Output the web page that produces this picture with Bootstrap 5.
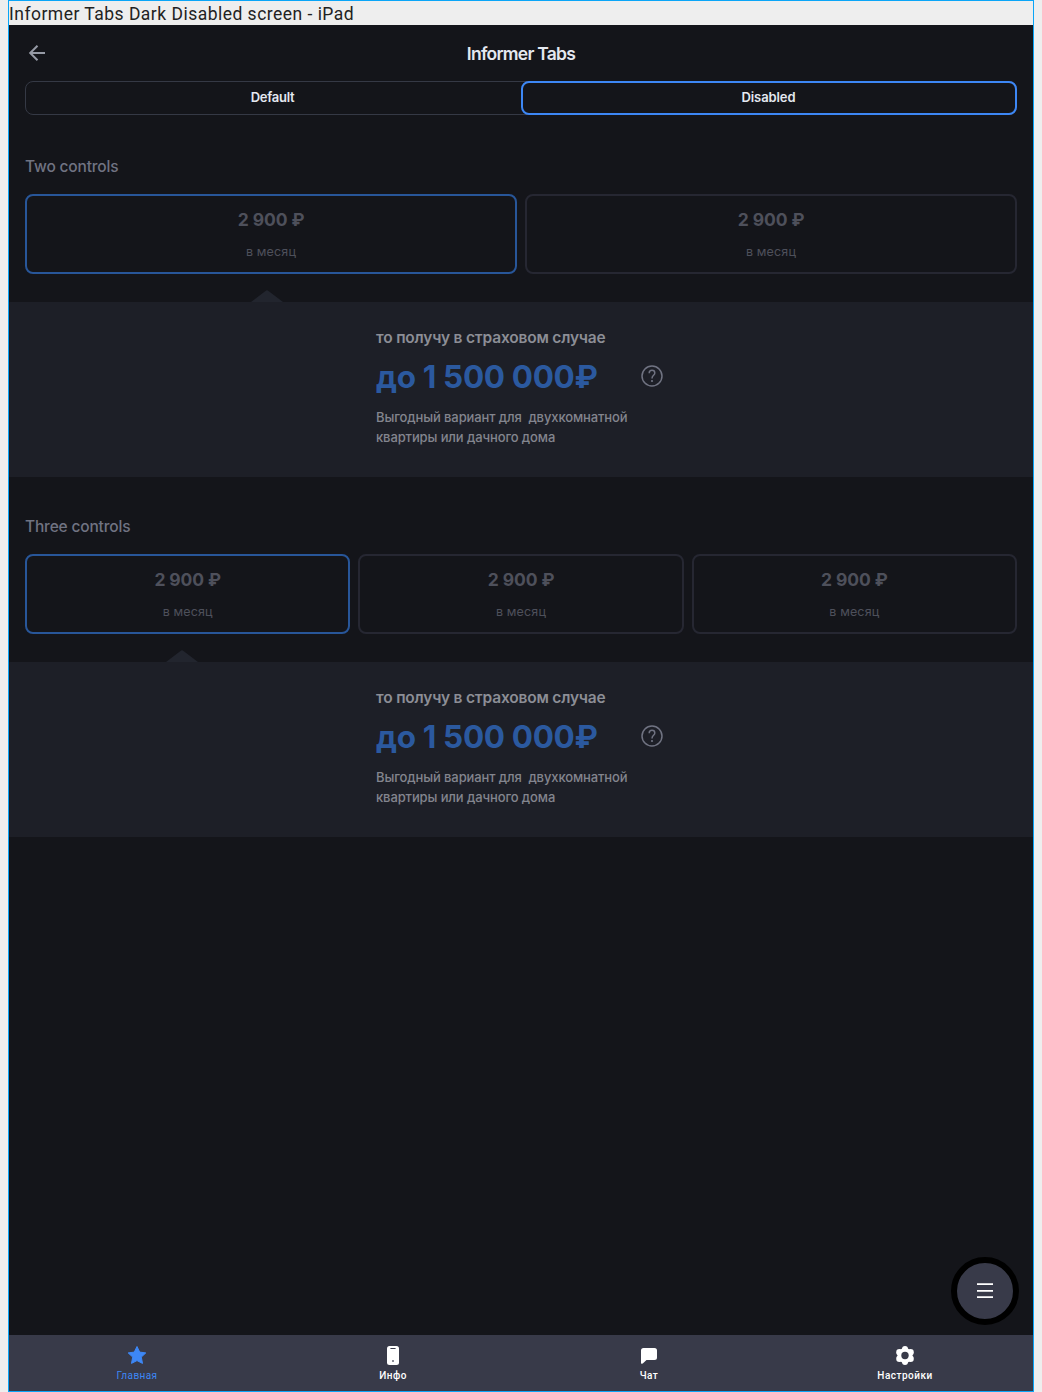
<!DOCTYPE html>
<html lang="ru">
<head>
<meta charset="utf-8">
<meta name="viewport" content="width=device-width, initial-scale=1">
<title>Informer Tabs</title>
<link href="https://cdn.jsdelivr.net/npm/bootstrap@5.3.0/dist/css/bootstrap.min.css" rel="stylesheet">
<style>
body{background:#eee;font-family:Inter,"Liberation Sans",sans-serif;height:1392px;overflow:hidden;margin:0}
.artboard{width:1026px;height:1392px;margin-left:8px;border:1px solid #0aa5f7}
.caption-line{height:24px;line-height:27px;font-family:Roboto,sans-serif;font-size:17.5px;letter-spacing:.48px;color:#222;white-space:nowrap}
.screen{background:#14151a;height:1366px}
.topbar{height:56px}
.back-btn{left:16px;top:16px;width:24px;height:24px}
.topbar h1{font-size:17.5px;font-weight:600;letter-spacing:-.75px;color:#e4e8f0;line-height:24px;padding-top:2px}
.segments{height:34px;margin:0 16px;border:1px solid #353945;border-radius:8px}
.segments button{flex:0 0 calc(50% + 1px);background:none;border:0;margin:-1px 0 -1px -1px;font-size:13px;font-weight:600;letter-spacing:-.25px;color:#e4e8f0;line-height:18px;padding:0 1px 2px 0}
.segments button.active{border:2px solid #3d87f5;border-radius:8px;margin:-1px -1px -1px 0;letter-spacing:-.1px}
.section-head{height:79px;padding:40px 16px 0;font-size:15.5px;line-height:24px;font-weight:500;letter-spacing:-.17px;color:#707382}
.section-head.next-head{height:77px;padding-top:38px}
.options{margin:0 16px;gap:8px}
.option{flex:1 1 0;height:80px;border:2px solid #262732;border-radius:8px;background:none;padding:12px 0 0;color:#4e505b}
.option.selected{border-color:#285699}
.price{font-size:17.5px;line-height:24px;font-weight:700;letter-spacing:-.1px}
.period{font-size:12.5px;line-height:20px;margin-top:10px;letter-spacing:.15px}
.pointer-row{height:28px;padding-top:16px}
.pointer-row svg{display:block}
.pointer-two{margin-left:242px}
.pointer-three{margin-left:157px}
.informer{background:#1d1f27;height:175px;padding-top:24px}
.informer-body{width:290px}
.lead-text{font-size:15.5px;line-height:24px;font-weight:600;letter-spacing:-.18px;color:#8c8e96}
.sum-row{height:40px;margin-top:6px}
.sum{font-size:31.5px;line-height:40px;font-weight:700;letter-spacing:-.35px;color:#2b599f;white-space:nowrap;padding-top:1px}
.note{font-size:13px;line-height:20px;font-weight:500;letter-spacing:-.11px;color:#83858e;margin-top:11px;white-space:pre}
.help-icon{margin-right:3px}
.fab{right:14px;bottom:66px;width:68px;height:68px;border-radius:50%;border:6px solid #000;background:#383a49;padding:0}
.bottom-nav{height:56px;background:#383a49}
.bottom-nav a{flex:1 1 0;color:#fff;text-decoration:none;font:500 10px/12px Roboto,sans-serif;letter-spacing:.5px;padding-top:8px}
.bottom-nav a.active{color:#3d87f5;font-weight:400;letter-spacing:.4px}
.bottom-nav svg{width:24px;height:24px;display:block;margin-bottom:3px}
</style>
<script src="https://cdn.jsdelivr.net/npm/bootstrap@5.3.0/dist/js/bootstrap.bundle.min.js"></script>
</head>
<body>
<div class="artboard">
  <div class="caption-line">Informer Tabs Dark Disabled screen - iPad</div>
  <main class="screen position-relative d-flex flex-column">
    <header class="topbar position-relative d-flex align-items-center justify-content-center">
      <a href="#" class="back-btn position-absolute" aria-label="Back"><svg class="d-block" width="24" height="24" fill="none" stroke="#969aa5" stroke-width="2"><path d="M20 12H5.500M12.500 4.700L5.200 12l7.300 7.300"/></svg></a>
      <h1 class="m-0" id="title">Informer Tabs</h1>
    </header>
    <div class="segments d-flex">
      <button type="button">Default</button>
      <button type="button" class="active">Disabled</button>
    </div>

    <section>
      <div class="section-head">Two controls</div>
      <div class="options d-flex">
        <div class="option selected text-center"><div class="price">2 900 ₽</div><div class="period">в месяц</div></div>
        <div class="option text-center"><div class="price">2 900 ₽</div><div class="period">в месяц</div></div>
      </div>
      <div class="pointer-row"><svg class="pointer-two" width="32" height="12"><path d="M0 12L14.500 1Q16-.4 17.500 1L32 12z" fill="#22252e"/></svg></div>
      <div class="informer d-flex justify-content-center">
        <div class="informer-body">
          <div class="lead-text">то получу в страховом случае</div>
          <div class="sum-row d-flex align-items-center justify-content-between">
            <div class="sum">до 1 500 000₽</div>
            <svg class="help-icon" width="22" height="22" fill="none" stroke="#707382" stroke-width="1.5"><circle cx="11" cy="11" r="10"/><path d="M8.200 8.200C8.200 6.200 9.400 5.200 11 5.200s2.800 1.100 2.800 2.700c0 2.400-2.800 2.500-2.800 5.500"/><circle cx="11" cy="16" r="1.100" fill="#707382" stroke="none"/></svg>
          </div>
          <div class="note">Выгодный вариант для  двухкомнатной
квартиры или дачного дома</div>
        </div>
      </div>
    </section>

    <section>
      <div class="section-head next-head">Three controls</div>
      <div class="options d-flex">
        <div class="option selected text-center"><div class="price">2 900 ₽</div><div class="period">в месяц</div></div>
        <div class="option text-center"><div class="price">2 900 ₽</div><div class="period">в месяц</div></div>
        <div class="option text-center"><div class="price">2 900 ₽</div><div class="period">в месяц</div></div>
      </div>
      <div class="pointer-row"><svg class="pointer-three" width="32" height="12"><path d="M0 12L14.500 1Q16-.4 17.500 1L32 12z" fill="#22252e"/></svg></div>
      <div class="informer d-flex justify-content-center">
        <div class="informer-body">
          <div class="lead-text">то получу в страховом случае</div>
          <div class="sum-row d-flex align-items-center justify-content-between">
            <div class="sum">до 1 500 000₽</div>
            <svg class="help-icon" width="22" height="22" fill="none" stroke="#707382" stroke-width="1.5"><circle cx="11" cy="11" r="10"/><path d="M8.200 8.200C8.200 6.200 9.400 5.200 11 5.200s2.800 1.100 2.800 2.700c0 2.400-2.800 2.500-2.800 5.500"/><circle cx="11" cy="16" r="1.100" fill="#707382" stroke="none"/></svg>
          </div>
          <div class="note">Выгодный вариант для  двухкомнатной
квартиры или дачного дома</div>
        </div>
      </div>
    </section>

    <button type="button" class="fab position-absolute d-flex align-items-center justify-content-center" aria-label="Menu"><svg width="16" height="16" stroke="#fff" stroke-width="1.8"><path d="M0 1.200h16M0 7.800h16M0 14.200h16"/></svg></button>

    <nav class="bottom-nav d-flex mt-auto">
      <a href="#" class="active d-flex flex-column align-items-center"><svg fill="#3d87f5" stroke="#3d87f5" stroke-linejoin="round"><path d="M12 3.500l2.700 5.600 6.100.8-4.500 4.200 1.200 6.300L12 17.600l-5.500 2.800 1.200-6.300-4.500-4.200 6.100-.8z"/></svg>Главная</a>
      <a href="#" class="d-flex flex-column align-items-center"><svg><rect x="6" y="3" width="12" height="19" rx="2.500" fill="#fff"/><path d="M9.800 5.500h4.400" stroke="#383a49" stroke-width="1" stroke-linecap="round"/><rect x="11" y="17" width="2" height="2" fill="#8c8e98"/></svg>Инфо</a>
      <a href="#" class="d-flex flex-column align-items-center"><svg fill="#fff"><path d="M6.500 5h11A2.500 2.500 0 0 1 20 7.500v7A2.500 2.500 0 0 1 17.500 17H9.500l-3.500 3.300Q4 21.500 4 20V7.500A2.500 2.500 0 0 1 6.500 5z"/></svg>Чат</a>
      <a href="#" class="d-flex flex-column align-items-center"><svg><g fill="#fff"><circle cx="12" cy="12.500" r="7.500"/><circle cx="12" cy="6" r="3"/><circle cx="17.600" cy="9.200" r="3.200"/><circle cx="17.600" cy="15.800" r="3.200"/><circle cx="12" cy="19" r="3"/><circle cx="6.400" cy="15.800" r="3.200"/><circle cx="6.400" cy="9.200" r="3.200"/></g><circle cx="12" cy="12.500" r="3.700" fill="#383a49"/></svg>Настройки</a>
    </nav>
  </main>
</div>
</body>
</html>
